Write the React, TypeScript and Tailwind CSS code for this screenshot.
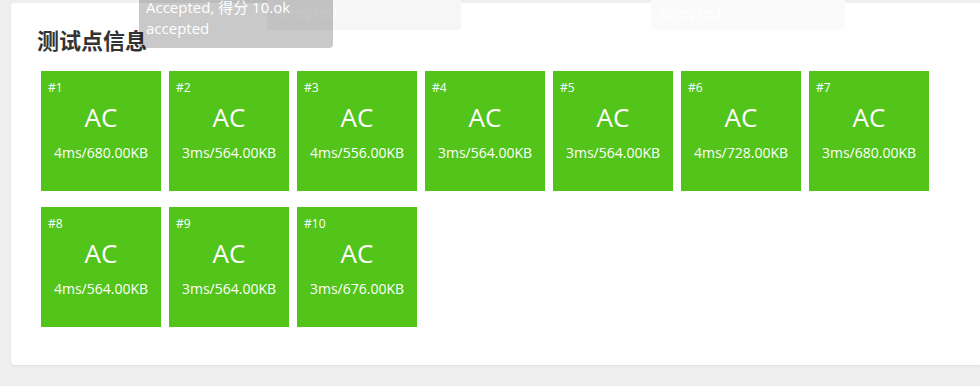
const cases = [
  { id: 1, time: "4ms", mem: "680.00KB" },
  { id: 2, time: "3ms", mem: "564.00KB" },
  { id: 3, time: "4ms", mem: "556.00KB" },
  { id: 4, time: "3ms", mem: "564.00KB" },
  { id: 5, time: "3ms", mem: "564.00KB" },
  { id: 6, time: "4ms", mem: "728.00KB" },
  { id: 7, time: "3ms", mem: "680.00KB" },
  { id: 8, time: "4ms", mem: "564.00KB" },
  { id: 9, time: "3ms", mem: "564.00KB" },
  { id: 10, time: "3ms", mem: "676.00KB" },
]

function CaseBox({ id, time, mem }: { id: number; time: string; mem: string }) {
  return (
    <div className="flex h-[120px] w-[120px] flex-col bg-[#52c41a] text-white">
      <div className="pl-[7px] pt-[8px] text-[12px] leading-[18px]">#{id}</div>
      <div className="mt-[4px] text-center text-[26px] leading-[32px]">AC</div>
      <div className="mt-[10px] text-center text-[14px] leading-[20px]">
        {time}/{mem}
      </div>
    </div>
  )
}

export default function App() {
  return (
    <div
      className="relative h-[386px] w-[980px] overflow-hidden bg-[#efefef] pt-[3px] pl-[11px]"
      style={{ fontFamily: '"Open Sans", "Noto Sans CJK SC", sans-serif' }}
    >
      <div className="h-[362px] rounded-l-[4px] bg-white pl-[26px] pt-[22px] shadow-[0_1px_2px_rgba(0,0,0,0.08)]">
        <h2 className="text-[22px] font-bold leading-[30px] text-[#333]">测试点信息</h2>
        <div className="ml-[4px] mt-[16px] grid w-[896px] grid-cols-[repeat(7,120px)] gap-x-[8px] gap-y-[16px]">
          {cases.map((c) => (
            <CaseBox key={c.id} {...c} />
          ))}
        </div>
      </div>

      {/* fading tooltips at the top */}
      <div className="absolute left-[651px] top-0 h-[30px] w-[194px] rounded-b-[4px] bg-[#fafafa] pl-[7px] pt-[1px] text-[15px] leading-[22px] text-white">
        accepted
      </div>
      <div className="absolute left-[267px] top-0 h-[30px] w-[194px] rounded-b-[4px] bg-[#f6f6f6] pl-[7px] pt-[1px] text-[15px] leading-[22px] text-[#fdfdfd]">
        accepted
      </div>
      <div className="absolute left-[139px] top-0 h-[48px] w-[194px] rounded-b-[4px] bg-[rgba(0,0,0,0.21)] px-[7px] text-[15px] leading-[21px] text-white">
        <div className="-mt-[3px]">Accepted, 得分 10.ok</div>
        <div>accepted</div>
      </div>
    </div>
  )
}
